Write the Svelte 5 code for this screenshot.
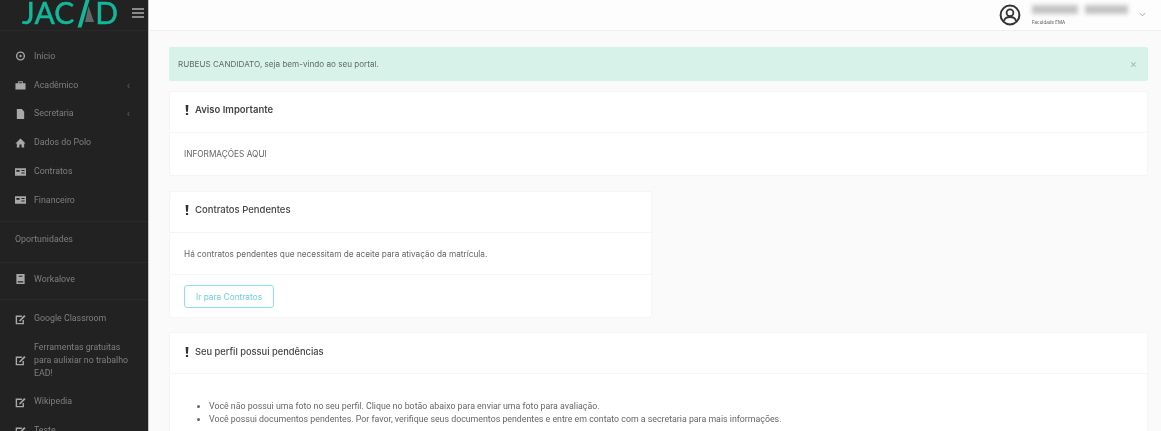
<script>
  const mainNav = [
    { label: 'Início', icon: 'clock' },
    { label: 'Acadêmico', icon: 'case', arrow: true },
    { label: 'Secretaria', icon: 'file', arrow: true },
    { label: 'Dados do Polo', icon: 'home' },
    { label: 'Contratos', icon: 'card' },
    { label: 'Financeiro', icon: 'card' }
  ];
  const linkNav = [
    { label: 'Google Classroom' },
    { label: 'Ferramentas gratuitas para aulixiar no trabalho EAD!', tall: true },
    { label: 'Wikipedia' },
    { label: 'Teste' }
  ];
</script>

{#snippet navIcon(name)}
  <svg class="nav-icon" viewBox="0 0 12 12" aria-hidden="true">
    {#if name === 'clock'}
      <circle cx="6" cy="6" r="4.200" fill="none" stroke="currentColor" stroke-width="1.500" />
      <circle cx="6" cy="6" r="1.300" fill="currentColor" />
    {:else if name === 'case'}
      <path d="M.5 4h11v7H.5z M3.500 4V1.800h5V4H7.500V3h-3v1z" fill="currentColor" />
    {:else if name === 'file'}
      <path d="M2 .5H7.500l2.500 3v8H2z" fill="currentColor" />
    {:else if name === 'home'}
      <path d="M6 1 11.500 6.500H10V11H7.200V7.500H4.800V11H2V6.500H.5z" fill="currentColor" />
    {:else if name === 'card'}
      <path d="M0 2h12v8H0z M1.500 3.800v2h3.500v-2z M7 3.800v1h3.500v-1z M7 6.500v1h3.500v-1z" fill="currentColor" fill-rule="evenodd" />
    {:else if name === 'book'}
      <path d="M1.500 .5h9v11h-9z M3 8.500v1.200h6V8.500z M4 2.500v1h4v-1z" fill="currentColor" fill-rule="evenodd" />
    {:else}
      <path d="M7.500 3H1.500v8h7.500V7" fill="none" stroke="currentColor" stroke-width="1.500" />
      <path d="M4.500 7.500 10 1.500l1.500 1.500-5.500 5.500H4.500z" fill="currentColor" />
    {/if}
  </svg>
{/snippet}

{#snippet warn()}
  <svg class="warn" viewBox="0 0 4 10" aria-hidden="true">
    <path d="M.6 0h2.800L2.900 6.800H1.100z M.9 8h2.200v2H.9z" fill="currentColor" />
  </svg>
{/snippet}

<div class="page">
  <aside class="sidebar">
    <div class="brand">
      <div class="logo">
        <span class="logo-text">JAC</span><svg class="logo-a" viewBox="0 0 22 28" aria-hidden="true">
          <path d="M14.500 6 20 22H11z" fill="#5f6866" />
          <path d="M11.500 0h4L7.500 27.500H3.500z" fill="#12b89a" />
        </svg><span class="logo-text d">D</span>
      </div>
      <svg class="burger" viewBox="0 0 12 10" aria-hidden="true">
        <path d="M0 0h12v2H0z M0 4h12v2H0z M0 8h12v2H0z" fill="currentColor" />
      </svg>
    </div>

    <nav class="nav-group first">
      {#each mainNav as item}
        <div class="nav-item">
          {@render navIcon(item.icon)}
          <span class="nav-label">{item.label}</span>
          {#if item.arrow}<span class="arrow">‹</span>{/if}
        </div>
      {/each}
    </nav>
    <div class="nav-heading">Oportunidades</div>
    <div class="nav-group solo">
      <div class="nav-item">
        {@render navIcon('book')}
        <span class="nav-label">Workalove</span>
      </div>
    </div>
    <div class="nav-group links">
      {#each linkNav as item}
        <div class="nav-item" class:tall={item.tall}>
          {@render navIcon('link')}
          <span class="nav-label">{item.label}</span>
        </div>
      {/each}
    </div>
  </aside>

  <div class="content">
    <header class="topbar">
      <svg class="avatar" viewBox="0 0 22 22" aria-hidden="true">
        <circle cx="11" cy="11" r="9.400" fill="none" stroke="currentColor" stroke-width="2" />
        <circle cx="11" cy="8.800" r="3.400" fill="none" stroke="currentColor" stroke-width="1.800" />
        <path d="M5 17c.6-3 3-4 6-4s5.400 1 6 4" fill="none" stroke="currentColor" stroke-width="1.800" />
      </svg>
      <div class="user">
        <div class="user-name"><span class="smear a"></span><span class="smear b"></span></div>
        <div class="user-org">Faculdade EMA</div>
      </div>
      <svg class="chevron" viewBox="0 0 8 5" aria-hidden="true">
        <path d="M1 1l3 3 3-3" fill="none" stroke="currentColor" stroke-width="1" />
      </svg>
    </header>

    <main class="main">
      <div class="alert">
        <span>RUBEUS CANDIDATO, seja bem-vindo ao seu portal.</span>
        <span class="close">×</span>
      </div>

      <section class="card first-card">
        <h2 class="card-head strong">{@render warn()}Aviso Importante</h2>
        <div class="card-body">INFORMAÇÕES AQUI</div>
      </section>

      <section class="card half">
        <h2 class="card-head">{@render warn()}Contratos Pendentes</h2>
        <div class="card-body">Há contratos pendentes que necessitam de aceite para ativação da matrícula.</div>
        <div class="card-foot"><button class="btn">Ir para Contratos</button></div>
      </section>

      <section class="card last">
        <h2 class="card-head narrow">{@render warn()}Seu perfil possui pendências</h2>
        <ul class="pend">
          <li>Você não possui uma foto no seu perfil. Clique no botão abaixo para enviar uma foto para avaliação.</li>
          <li>Você possui documentos pendentes. Por favor, verifique seus documentos pendentes e entre em contato com a secretaria para mais informações.</li>
        </ul>
      </section>
    </main>
  </div>
</div>

<style>
  :global(body) {
    margin: 0;
    overflow: hidden;
  }
  .page {
    display: flex;
    width: 1161px;
    height: 431px;
    overflow: hidden;
    background: #fafafa;
    font-family: Inter, "Liberation Sans", sans-serif;
    color: #555;
    filter: blur(0.6px);
  }
  .sidebar {
    flex: 0 0 148px;
    height: 431px;
    overflow: hidden;
    background: #222;
    color: #7f7f7f;
    border-right: 1px solid #c4c4c4;
    font-family: Roboto, sans-serif;
    font-size: 8.800px;
  }
  .brand {
    display: flex;
    align-items: flex-start;
    height: 31px;
    border-bottom: 1px solid #292929;
    padding-left: 22px;
    box-sizing: border-box;
  }
  .logo {
    display: flex;
    align-items: flex-start;
    width: 110px;
    height: 28px;
    color: #12b89a;
  }
  .logo-text {
    font-family: Lato, sans-serif;
    font-size: 30px;
    font-weight: 400;
    line-height: 24px;
    -webkit-text-stroke: 0.5px #12b89a;
  }
  .logo-text.d {
    margin-left: -1px;
  }
  .logo-a {
    flex: 0 0 22px;
    width: 22px;
    height: 28px;
  }
  .burger {
    width: 12px;
    height: 10px;
    margin-top: 8px;
    color: #8a8a8a;
  }
  .nav-group {
    border-bottom: 1px solid #292929;
  }
  .nav-group.first {
    padding: 11px 0 6px;
  }
  .nav-group.solo {
    padding: 2px 0 5px;
  }
  .nav-group.links {
    padding-top: 5px;
    border-bottom: 0;
  }
  .nav-item {
    display: flex;
    align-items: center;
    gap: 8px;
    min-height: 28.800px;
    padding: 0 15px;
    line-height: 13px;
  }
  .nav-item.tall {
    min-height: 54px;
  }
  .nav-icon {
    flex: 0 0 11px;
    width: 11px;
    height: 12px;
    color: #a8a8a8;
  }
  .nav-label {
    flex: 1;
  }
  .arrow {
    margin-right: 3px;
    font-size: 11px;
    color: #5e5e5e;
  }
  .nav-heading {
    display: flex;
    align-items: center;
    height: 41px;
    padding: 0 0 6px 15px;
    box-sizing: border-box;
    border-bottom: 1px solid #292929;
  }
  .content {
    flex: 1;
    min-width: 0;
  }
  .topbar {
    display: flex;
    align-items: center;
    justify-content: flex-end;
    height: 31px;
    box-sizing: border-box;
    border-bottom: 1px solid #f0f0f0;
    background: #fdfdfd;
    padding: 0 15px 1px 0;
  }
  .avatar {
    width: 22px;
    height: 22px;
    margin-right: 11px;
    color: #333;
  }
  .user {
    width: 98px;
    margin-right: 9px;
  }
  .user-name {
    display: flex;
    gap: 7px;
    height: 10px;
    margin-bottom: 5px;
  }
  .smear {
    height: 9px;
    background: #c4c4c4;
    filter: blur(2px);
  }
  .smear.a {
    width: 46px;
  }
  .smear.b {
    width: 43px;
  }
  .user-org {
    font-size: 4.500px;
    line-height: 5px;
    color: #555;
  }
  .chevron {
    width: 7px;
    height: 5px;
    color: #999;
  }
  .main {
    padding: 16px 13px 0 20px;
  }
  .alert {
    display: flex;
    justify-content: space-between;
    align-items: center;
    height: 34px;
    box-sizing: border-box;
    padding: 0 11px 0 9px;
    border-radius: 2px;
    background: #d7f3e9;
    color: #5f6b68;
    font-size: 8.150px;
  }
  .close {
    font-size: 11px;
    color: #a5b5af;
  }
  .card {
    background: #fff;
    border: 1px solid #f5f5f5;
    border-radius: 2px;
    box-sizing: border-box;
  }
  .first-card {
    margin-top: 10px;
    height: 85px;
  }
  .half {
    width: 483px;
    margin-top: 15px;
    height: 127px;
  }
  .last {
    margin-top: 14px;
    height: 130px;
  }
  .card-head {
    display: flex;
    align-items: center;
    gap: 6px;
    height: 41px;
    box-sizing: border-box;
    margin: 0;
    padding: 0 15px 5px;
    border-bottom: 1px solid #f5f5f5;
    font-size: 9.500px;
    font-weight: 500;
    color: #444;
  }
  .card-head.strong {
    font-weight: 600;
  }
  .card-head.narrow {
    font-size: 9.300px;
    padding-bottom: 3px;
  }
  .warn {
    flex: 0 0 4px;
    width: 4px;
    height: 10px;
    color: #333;
  }
  .card-body {
    display: flex;
    align-items: center;
    height: 42px;
    padding: 0 14px;
    font-size: 8.250px;
    color: #666;
  }
  .card-foot {
    padding: 10px 14px 9px;
    border-top: 1px solid #f5f5f5;
    margin-top: -1px;
  }
  .btn {
    display: block;
    width: 90px;
    height: 23px;
    padding: 0;
    border: 1.500px solid #8fe0ee;
    border-radius: 3px;
    background: #fff;
    color: #6ccfe2;
    font: 8.300px Inter, sans-serif;
  }
  .pend {
    margin: 0;
    padding: 26px 0 0 39px;
    font-family: Roboto, sans-serif;
    font-size: 8.800px;
    line-height: 13px;
    color: #666;
  }
</style>
